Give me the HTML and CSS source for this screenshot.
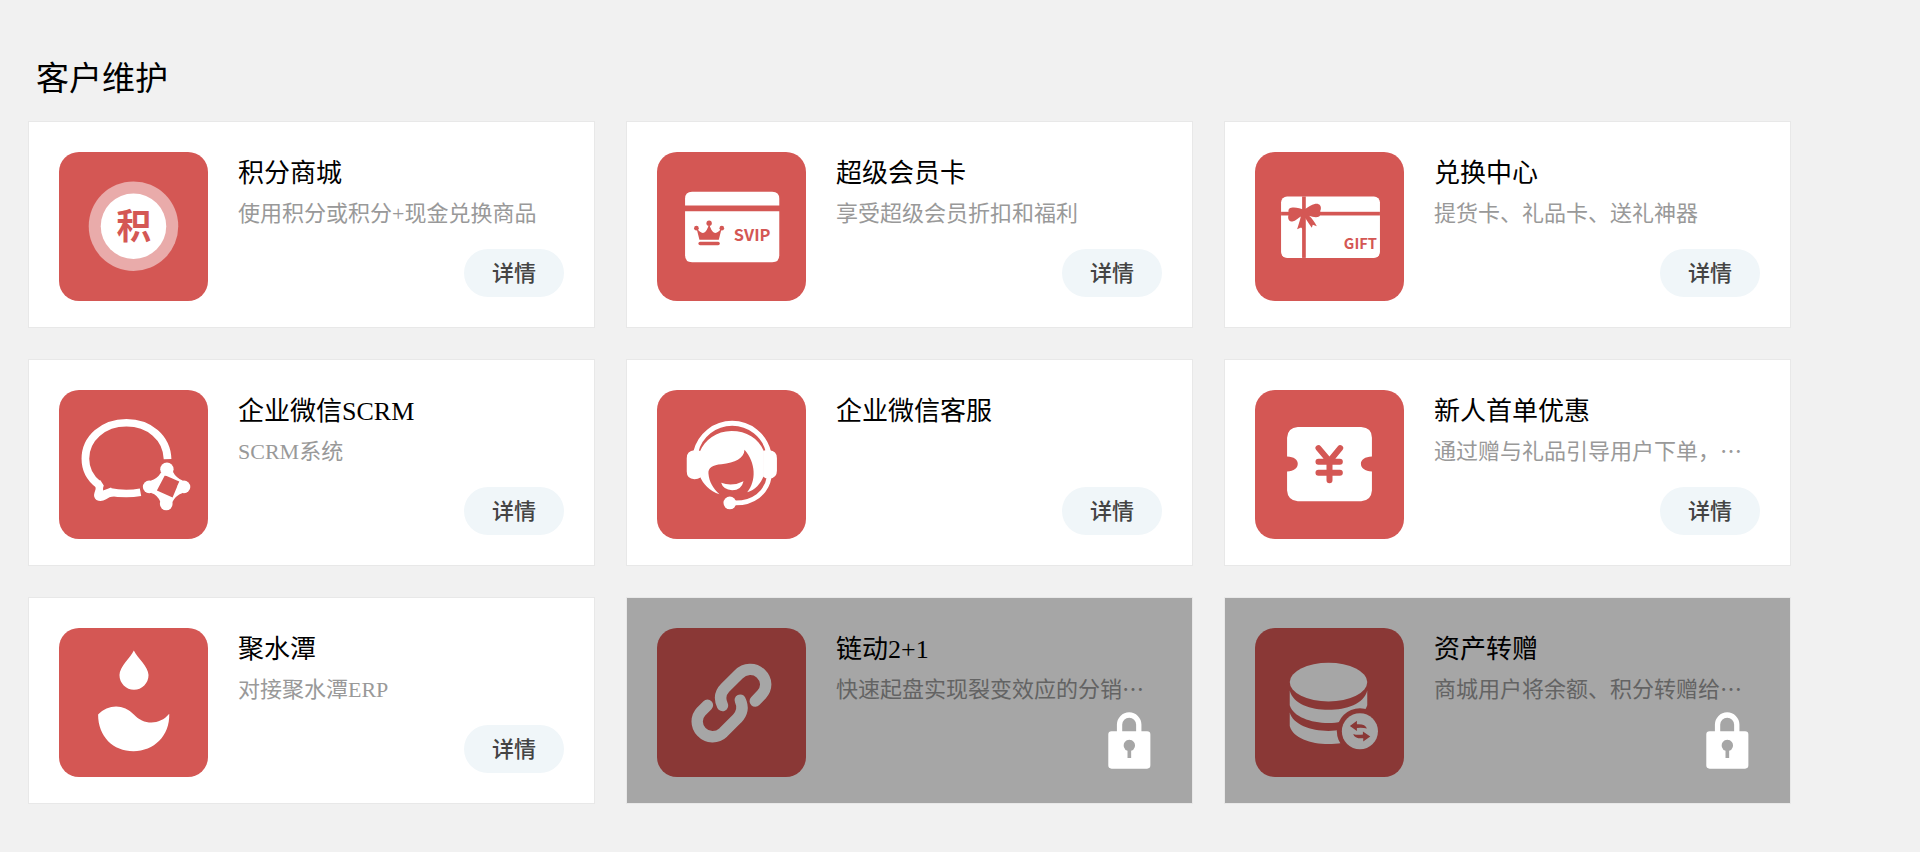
FILE: index.html
```html
<!DOCTYPE html>
<html lang="zh-CN">
<head>
    <meta charset="UTF-8">
    <meta name="viewport" content="width=device-width, initial-scale=1.0">
    <title>客户维护</title>
    <link rel="stylesheet" href="styles.css">
</head>
<body>
    <main class="container">
        <h2 class="section-title">客户维护</h2>

        <div class="card-list">
            <div class="card">
                <svg class="card-icon" viewBox="28 37 446 446" aria-hidden="true">
                    <circle cx="251" cy="259" r="134" fill="#e9abaa"/>
                    <circle cx="251" cy="259" r="98"/>
                    <text class="icon-text" x="252" y="296" font-size="104" text-anchor="middle">积</text>
                </svg>
                <div class="card-body">
                    <h3 class="card-name">积分商城</h3>
                    <p class="card-desc">使用积分或积分+现金兑换商品</p>
                    <button type="button" class="detail-btn">详情</button>
                </div>
            </div>

            <div class="card">
                <svg class="card-icon" viewBox="22 37 446 446" aria-hidden="true">
                    <path d="M106 197V177Q106 156 127 156H367Q388 156 388 177V197Z"/>
                    <path d="M106 214H388V346Q388 367 367 367H127Q106 367 106 346Z"/>
                    <g class="red">
                        <path d="M140 264Q152 282 162 279Q173 273 178 250Q183 273 194 279Q204 282 216 264L207 300H149Z"/>
                        <circle cx="140" cy="265" r="7"/>
                        <circle cx="178" cy="250" r="8"/>
                        <circle cx="216" cy="265" r="7"/>
                        <rect x="146" y="306" width="64" height="10" rx="5"/>
                    </g>
                    <text class="icon-text" x="252" y="304" font-size="49">SVIP</text>
                </svg>
                <div class="card-body">
                    <h3 class="card-name">超级会员卡</h3>
                    <p class="card-desc">享受超级会员折扣和福利</p>
                    <button type="button" class="detail-btn">详情</button>
                </div>
            </div>

            <div class="card">
                <svg class="card-icon" viewBox="46 37 446 446" aria-hidden="true">
                    <rect x="124" y="170" width="296" height="184" rx="18"/>
                    <g class="red">
                        <rect x="187" y="170" width="11" height="184"/>
                        <rect x="124" y="216" width="296" height="11"/>
                        <path d="M193 210C180 203 156 200 149 206C143 212 149 219 146 226C143 238 149 245 158 245C168 243 176 234 183 230C181 241 176 255 172 268L184 263L190 269C194 255 195 244 196 234C202 244 209 254 216 264L219 255L231 259C224 246 216 235 208 228C217 231 230 235 238 230C245 224 239 215 243 208C245 197 237 190 227 192C214 194 203 204 193 210Z"/>
                    </g>
                    <text class="icon-text" x="312" y="328" font-size="44">GIFT</text>
                </svg>
                <div class="card-body">
                    <h3 class="card-name">兑换中心</h3>
                    <p class="card-desc">提货卡、礼品卡、送礼神器</p>
                    <button type="button" class="detail-btn">详情</button>
                </div>
            </div>

            <div class="card">
                <svg class="card-icon" viewBox="28 30 446 446" aria-hidden="true">
                    <path class="line" stroke-width="23" d="M353 237C351 172 297 128 230 128C160 128 107 175 107 236C107 268 121 294 146 313"/>
                    <path class="line" stroke-width="23" d="M178 335Q228 344 272 336"/>
                    <path d="M130 306L152 300L162 316Q158 326 160 331L184 322L192 348Q178 350 169 357Q154 366 140 359Q130 350 134 338Q140 328 137 314Z"/>
                    <circle cx="351" cy="267" r="20"/>
                    <circle cx="402" cy="320" r="19"/>
                    <circle cx="298" cy="320" r="19"/>
                    <circle cx="349" cy="371" r="19"/>
                    <path fill-rule="evenodd" d="M369 275Q378 293 398 301V338Q376 346 367 366H332Q324 344 304 338L302 302Q322 296 333 278ZM345 285L388 304L368 352L321 331Z"/>
                </svg>
                <div class="card-body">
                    <h3 class="card-name">企业微信SCRM</h3>
                    <p class="card-desc">SCRM系统</p>
                    <button type="button" class="detail-btn">详情</button>
                </div>
            </div>

            <div class="card">
                <svg class="card-icon" viewBox="22 30 446 446" aria-hidden="true">
                    <path class="line" stroke-width="15" d="M138 216A112 112 0 0 1 356 216"/>
                    <path d="M152 213V292Q145 297 134 297Q111 296 111 274V234Q111 211 134 210Q145 208 152 213Z"/>
                    <path d="M340 213V290Q346 296 358 296Q381 294 381 272V234Q381 211 358 210Q346 208 340 213Z"/>
                    <path d="M150 215C165 180 200 153 245 153C290 153 325 175 342 213V285C333 310 315 330 292 336C320 302 318 248 284 209C282 236 256 247 215 252C188 254 175 262 176 280C178 305 190 325 209 342C180 333 160 311 150 288Z"/>
                    <path d="M214 308Q248 320 281 303Q275 330 247 330Q220 329 214 308Z"/>
                    <path class="line" stroke-width="14" d="M358 290C350 338 310 369 255 368"/>
                    <circle cx="240" cy="368" r="19"/>
                </svg>
                <div class="card-body">
                    <h3 class="card-name">企业微信客服</h3>
                    <button type="button" class="detail-btn">详情</button>
                </div>
            </div>

            <div class="card">
                <svg class="card-icon" viewBox="46 30 446 446" aria-hidden="true">
                    <path d="M174 141H364Q396 143 396 173V229C375 230 363 238 363 251S375 273 396 274V331Q394 361 364 363H174Q144 361 142 331V274C163 273 174 264 174 251S163 230 142 229V173Q144 143 174 141Z"/>
                    <path class="line red-line round" stroke-width="18" d="M236 204L269 243L301 204M269 243V300M236 245H300M236 278H300"/>
                </svg>
                <div class="card-body">
                    <h3 class="card-name">新人首单优惠</h3>
                    <p class="card-desc">通过赠与礼品引导用户下单，⋯</p>
                    <button type="button" class="detail-btn">详情</button>
                </div>
            </div>

            <div class="card">
                <svg class="card-icon" viewBox="28 37 446 446" aria-hidden="true">
                    <path d="M252 104C262 126 296 152 296 178A43 43 0 0 1 209 178C209 152 242 126 252 104Z"/>
                    <path d="M145 296C175 264 222 263 252 296C280 327 328 330 358 294C360 360 312 406 251 406S145 362 145 296Z"/>
                </svg>
                <div class="card-body">
                    <h3 class="card-name">聚水潭</h3>
                    <p class="card-desc">对接聚水潭ERP</p>
                    <button type="button" class="detail-btn">详情</button>
                </div>
            </div>

            <div class="card">
                <svg class="card-icon" viewBox="22 37 446 446" aria-hidden="true">
                    <path class="line round" stroke-width="34" d="M218 269C209 250 211 231 226 216L266 176C285 157 314 156 332 173C352 192 352 218 335 236L316 256"/>
                    <path class="line round" stroke-width="34" d="M173 268L155 286C138 304 138 330 155 348C173 367 202 367 220 350L262 308C277 292 280 272 271 253"/>
                </svg>
                <div class="card-body">
                    <h3 class="card-name">链动2+1</h3>
                    <p class="card-desc">快速起盘实现裂变效应的分销⋯</p>
                </div>
                <div class="card-mask">
                    <svg class="lock-icon" viewBox="920 365 128 172" role="img" aria-label="未解锁">
                        <path class="line" stroke-width="16" d="M954 430V403A29 29 0 0 1 1012 403V430"/>
                        <path fill-rule="evenodd" d="M930 423H1037Q1047 423 1047 433V526Q1047 536 1037 536H930Q920 536 920 526V433Q920 423 930 423ZM978 482V504H989V482A17 17 0 1 0 978 482Z"/>
                    </svg>
                </div>
            </div>

            <div class="card">
                <svg class="card-icon" viewBox="46 37 446 446" aria-hidden="true">
                    <ellipse cx="266" cy="199" rx="116" ry="58"/>
                    <path d="M150 224C160 264 212 282 266 282S372 264 382 224V268C372 302 320 321 266 321S160 302 150 268Z"/>
                    <path d="M150 290C160 326 212 345 266 345S372 326 382 290V330C372 366 320 384 266 384S160 366 150 330Z"/>
                    <circle class="red" cx="360" cy="346" r="69"/>
                    <circle cx="360" cy="346" r="54"/>
                    <g class="red">
                        <path d="M330 330L351 315V325Q376 323 381 338Q368 334 351 336V345Z"/>
                        <path d="M340 354Q350 358 369 356V347L391 362L370 377V367Q344 369 340 354Z"/>
                    </g>
                </svg>
                <div class="card-body">
                    <h3 class="card-name">资产转赠</h3>
                    <p class="card-desc">商城用户将余额、积分转赠给⋯</p>
                </div>
                <div class="card-mask">
                    <svg class="lock-icon" viewBox="920 365 128 172" role="img" aria-label="未解锁">
                        <path class="line" stroke-width="16" d="M954 430V403A29 29 0 0 1 1012 403V430"/>
                        <path fill-rule="evenodd" d="M930 423H1037Q1047 423 1047 433V526Q1047 536 1037 536H930Q920 536 920 526V433Q920 423 930 423ZM978 482V504H989V482A17 17 0 1 0 978 482Z"/>
                    </svg>
                </div>
            </div>
        </div>
    </main>
</body>
</html>
```
FILE: styles.css
```css
* {
    box-sizing: border-box;
}
body {
    margin: 0;
    background-color: #f1f1f1;
    color: #000;
    font-family: "Liberation Serif", "Noto Sans CJK SC", serif;
}
.container {
    padding: 59px 129px 48px 28px;
}
.section-title {
    margin: 0 0 22px;
    padding-left: 8px;
    font-size: 33px;
    font-weight: 400;
    line-height: 40px;
}
.card-list {
    display: grid;
    grid-template-columns: repeat(3, 1fr);
    gap: 31px;
}
.card {
    position: relative;
    display: flex;
    gap: 30px;
    padding: 30px 30px 26px;
    background-color: #fff;
    border: 1px solid #e8e8e8;
}
.card-icon {
    flex: none;
    width: 149px;
    height: 149px;
    border-radius: 20px;
    background-color: #d45754;
    fill: #fff;
}
.card-icon .red {
    fill: #d45754;
}
.line {
    fill: none;
    stroke: #fff;
}
.red-line {
    stroke: #d45754;
}
.round {
    stroke-linecap: round;
    stroke-linejoin: round;
}
.icon-text {
    fill: #d45754;
    font-family: "Noto Sans CJK SC", sans-serif;
    font-weight: 700;
}
.card-body {
    flex: 1;
    min-width: 0;
    display: flex;
    flex-direction: column;
    padding: 4px 0;
}
.card-name {
    margin: 0 0 6px;
    font-size: 26px;
    font-weight: 400;
    line-height: 36px;
}
.card-desc {
    margin: 0;
    font-size: 22px;
    line-height: 32px;
    color: #999;
    white-space: nowrap;
    overflow: hidden;
    text-overflow: ellipsis;
}
.detail-btn {
    align-self: flex-end;
    margin-top: auto;
    padding: 0 28px 4px;
    border: none;
    border-radius: 24px;
    background-color: #f0f6f9;
    color: #444;
    font-family: "Noto Sans CJK SC", sans-serif;
    font-size: 22px;
    font-weight: 500;
    line-height: 44px;
    cursor: pointer;
}
.detail-btn:hover {
    background-color: #e3eef3;
}
/* 未开通的应用加遮罩 */
.card-mask {
    position: absolute;
    inset: 0;
    display: flex;
    justify-content: flex-end;
    align-items: flex-end;
    padding: 0 41px 34px 0;
    background-color: rgba(0, 0, 0, 0.35);
}
.lock-icon {
    width: 43px;
    height: 57px;
    fill: #fff;
}
```
